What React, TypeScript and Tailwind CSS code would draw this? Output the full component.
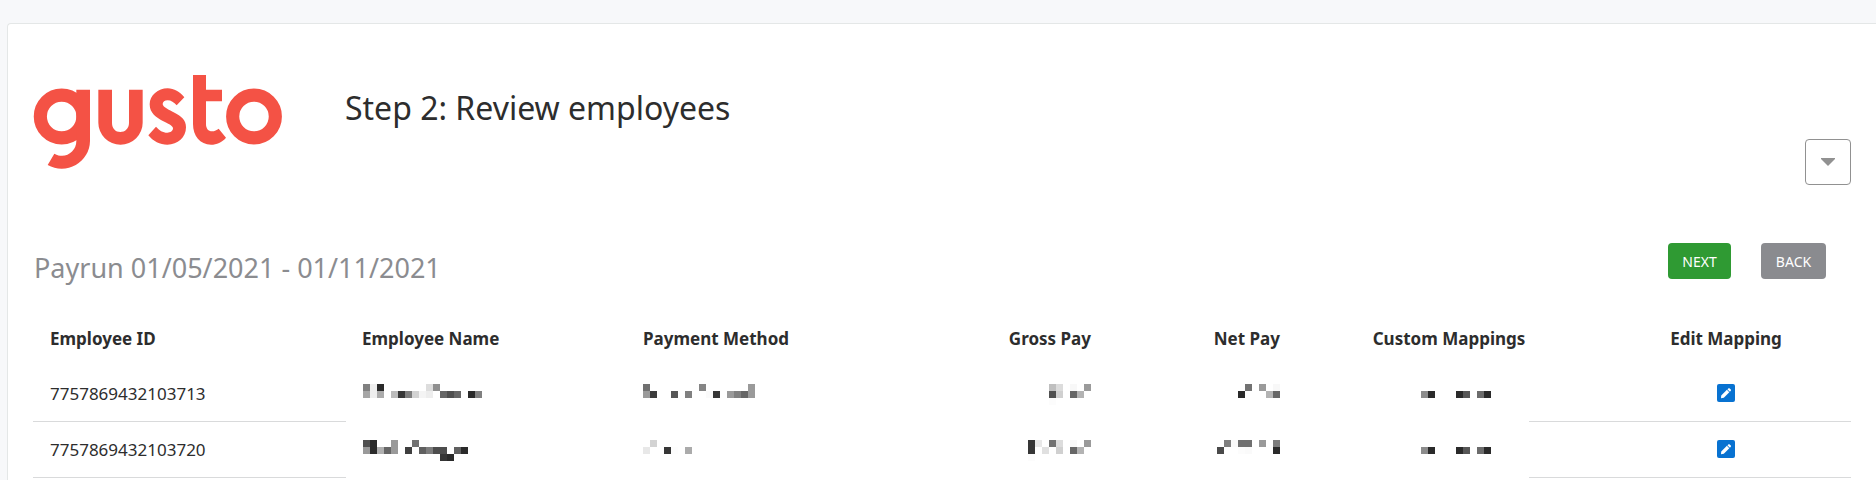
import React from "react";

type Redaction = string[];

interface Employee {
  id: string;
  name: Redaction;
  method: Redaction;
  gross: Redaction;
  net: Redaction;
  custom: Redaction;
}

// Each token is the two-digit grey level of one mosaic cell; ".." is blank.
const employees: Employee[] = [
  {
    id: "7757869432103713",
    name: [
      "80 ee 2a .. .. .. .. .. .. dd 90 .. .. .. .. .. ..",
      "a6 ee ab .. bb 36 7d d2 f4 ed .. 66 4f 66 .. 2a 80",
    ],
    method: [
      "70 .. .. .. .. .. .. .. 85 .. .. .. .. .. .. 9a",
      "9a 3c .. .. 57 .. 80 .. .. fa 36 .. 9a 80 66 9a",
    ],
    gross: [
      ".. .. .. bf dc .. f8 .. 9a",
      ".. .. .. 50 d0 .. 66 b3 ..",
      ".. .. .. fc .. .. .. .. ..",
    ],
    net: [".. .. .. .. 72 .. 9a .. f8", ".. .. .. 2a .. .. .. b3 66"],
    custom: ["..", ".. .. 8c 2a .. .. .. 2a 57 .. 6c 2a"],
  },
  {
    id: "7757869432103720",
    name: [
      "50 2a .. .. 9a .. .. 72 .. .. .. .. .. .. ..",
      "9a 2a b0 66 9a .. 3f .. 60 7d 4d 4d .. 60 2a",
      ".. .. .. .. .. .. .. .. .. .. .. 36 2a .. ..",
    ],
    method: [".. d3 .. .. .. .. ..", "e8 .. .. 36 fd .. ab"],
    gross: [
      "36 e8 .. 72 dc .. f8 .. 9a",
      "36 .. e0 .. d0 .. 66 b3 ..",
      "fc .. .. .. .. .. .. .. ..",
    ],
    net: [".. 80 fa 70 70 .. 9a .. 7d", "4a .. .. fc fa .. .. .. 2a"],
    custom: ["..", ".. .. 8c 2a .. .. .. 2a 57 .. 6c 2a"],
  },
];

const CELL = 7;

function Mosaic({ rows }: { rows: Redaction }) {
  const grid = rows.map((row) => row.split(" "));
  const columns = Math.max(...grid.map((row) => row.length));
  return (
    <svg
      width={columns * CELL}
      height={3 * CELL}
      shapeRendering="crispEdges"
      role="img"
      aria-label="Redacted"
      className="inline-block align-top"
    >
      {grid.map((row, y) =>
        row.map((level, x) =>
          level === ".." ? null : (
            <rect
              key={`${x}-${y}`}
              x={x * CELL}
              y={y * CELL}
              width={CELL}
              height={CELL}
              fill={`#${level}${level}${level}`}
            />
          ),
        ),
      )}
    </svg>
  );
}

function GustoLogo() {
  return (
    <svg
      viewBox="99 222 750 288"
      className="h-24 w-[250px] shrink-0"
      fill="#f45245"
      role="img"
      aria-label="Gusto"
    >
      <g fill="none" stroke="#f45245" strokeWidth="39.5">
        <circle cx="185" cy="349.5" r="64" />
        <circle cx="762" cy="349.5" r="64" />
      </g>
      <path d="M229 269H270V423A85 84 0 0 1 143 495L163 461C172 466 179 467 185 467A43 44 0 0 0 229 423Z" />
      <path d="M295 269H336V369C336 386 347 396 361 396S387 386 387 369V269H428V368A66.5 66 0 0 1 295 368Z" />
      <path d="M553 292C540 276 522 265 503 265C474 265 449 286 449 313C449 340 470 353 487 362C504 371 519 376 519 385C519 393 511 398 502 398C488 398 478 391 468 380L445 406C459 424 480 434 502 434C533 434 558 413 558 382C558 358 543 349 525 339C506 329 488 321 488 312C488 306 494 301 503 301C513 301 522 307 530 316Z" />
      <path d="M579 225H618V269H666V304H618V372C618 386 625 394 636 394C644 394 650 390 656 386L678 413C666 427 650 434 633 434C600 434 579 408 579 372Z" />
    </svg>
  );
}

function EditIcon() {
  return (
    <svg viewBox="0 0 18 18" className="size-[18px]" aria-hidden="true">
      <rect width="18" height="18" rx="2" fill="#0872d1" />
      <g fill="#fff">
        <path d="M9.9 5.8L12.3 8.2L6.8 13.8L4 14.3L4.2 11.4Z" />
        <path d="M10.4 5.3L11.4 4.4Q12 3.8 12.6 4.4L13.8 5.6Q14.4 6.2 13.8 6.8L12.9 7.7Z" />
      </g>
    </svg>
  );
}

export default function App() {
  return (
    <div className="min-h-screen overflow-hidden bg-[#f7f8fa] pt-[23px] pl-[7px] font-['Noto_Sans','Open_Sans',sans-serif] text-[#2d2d2d]">
      <main className="min-h-screen rounded-tl border-t border-l border-[#e4e7e7] bg-white pt-[50px] pr-[25px] pl-[25px]">
        <header className="flex items-start">
          <GustoLogo />
          <h1 className="ml-[62px] pt-3 text-[32px] leading-[44px]">Step 2: Review employees</h1>
          <button
            type="button"
            aria-label="More options"
            aria-haspopup="menu"
            className="mt-[65px] ml-auto flex size-[46px] items-center justify-center rounded border border-[#919191] bg-white"
          >
            <svg viewBox="0 0 14 8" className="h-2 w-3.5" fill="#919191" aria-hidden="true">
              <path d="M0 0H14V1L7 8L0 1Z" />
            </svg>
          </button>
        </header>

        <section className="mt-[58px] flex items-start justify-between">
          <h2 className="pt-[5px] pl-px text-[27px] leading-[40px] text-[#8b8c90]">
            Payrun 01/05/2021 - 01/11/2021
          </h2>
          <div className="flex gap-[30px] pr-[25px]">
            <button type="button" className="h-9 w-[63px] rounded bg-[#2f9a33] pt-0.5 text-sm text-white">
              NEXT
            </button>
            <button type="button" className="h-9 w-[65px] rounded bg-[#8a8b8f] pt-0.5 text-sm text-white">
              BACK
            </button>
          </div>
        </section>

        <table className="mt-[23px] w-full table-fixed border-separate border-spacing-0 text-[17px]">
          <colgroup>
            <col className="w-[313px]" />
            <col className="w-[280px]" />
            <col />
            <col className="w-[228px]" />
            <col className="w-[189px]" />
            <col className="w-[304px]" />
            <col className="w-[250px]" />
          </colgroup>
          <thead>
            <tr className="h-[55px]">
              <th className="px-[17px] text-left">Employee ID</th>
              <th className="px-4 text-left">Employee Name</th>
              <th className="px-[17px] text-left">Payment Method</th>
              <th className="px-[17px] text-right">Gross Pay</th>
              <th className="px-[17px] text-right">Net Pay</th>
              <th className="px-[17px] text-center">Custom Mappings</th>
              <th className="px-[17px] text-center">Edit Mapping</th>
            </tr>
          </thead>
          <tbody className="align-middle">
            {employees.map((employee) => (
              <tr key={employee.id} className="h-14">
                <td className="border-b border-[#d9dadb] px-[17px]">{employee.id}</td>
                <td className="px-[17px] pt-1.5">
                  <Mosaic rows={employee.name} />
                </td>
                <td className="px-[17px] pt-1.5">
                  <Mosaic rows={employee.method} />
                </td>
                <td className="px-[17px] pt-1.5 text-right">
                  <Mosaic rows={employee.gross} />
                </td>
                <td className="px-[17px] pt-1.5 text-right">
                  <Mosaic rows={employee.net} />
                </td>
                <td className="bg-[linear-gradient(#d9dadb,#d9dadb)] bg-[length:72px_1px] bg-right-bottom bg-no-repeat px-[17px] pt-1.5 text-center">
                  <Mosaic rows={employee.custom} />
                </td>
                <td className="border-b border-[#d9dadb] px-[17px] pb-0.5 text-center">
                  <button type="button" aria-label="Edit mapping" className="mx-auto block">
                    <EditIcon />
                  </button>
                </td>
              </tr>
            ))}
          </tbody>
        </table>
      </main>
    </div>
  );
}
